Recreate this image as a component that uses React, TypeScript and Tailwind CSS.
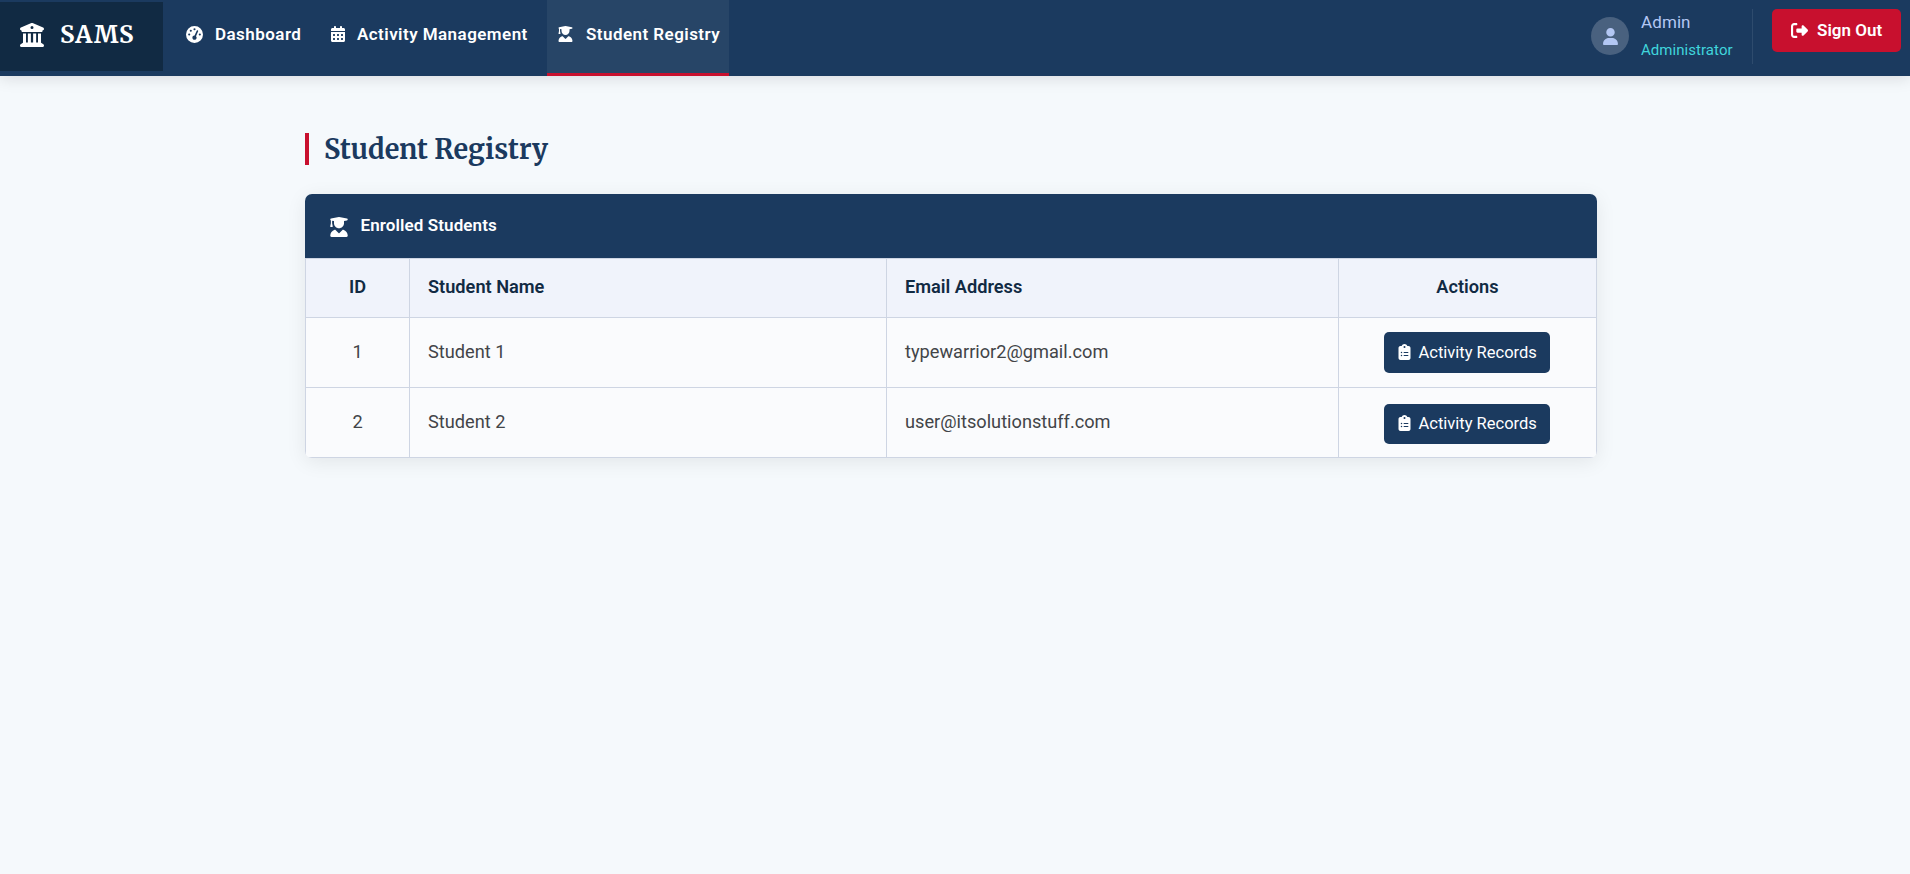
import type { ReactNode } from "react";
import {
  FaBuildingColumns,
  FaCalendarDays,
  FaClipboardList,
  FaGaugeHigh,
  FaRightFromBracket,
  FaUser,
  FaUserGraduate,
} from "react-icons/fa6";

const students = [
  { id: 1, name: "Student 1", email: "typewarrior2@gmail.com" },
  { id: 2, name: "Student 2", email: "user@itsolutionstuff.com" },
];

function NavItem({ icon, label, className }: { icon: ReactNode; label: string; className: string }) {
  return (
    <a href="#" className={`flex h-[76px] items-center border-b-[3px] pb-[5px] text-[17px] leading-6 font-semibold tracking-[0.45px] whitespace-nowrap ${className}`}>
      {icon}
      {label}
    </a>
  );
}

function Header() {
  return (
    <header className="flex h-[76px] items-start bg-[#1b3a5f] text-white shadow-[0_2px_15px_rgba(20,0,20,0.13)]">
      <div className="mt-[2px] flex h-[69px] w-[163px] items-center bg-[#112a43] pb-[3px] pl-5">
        <FaBuildingColumns className="mr-[16px] size-6" />
        <span className="font-['Merriweather','DejaVu_Serif_Condensed','DejaVu_Serif',serif] text-[24px] leading-8 font-bold tracking-[0.8px]">SAMS</span>
      </div>
      <nav className="flex pl-[23px]">
        <NavItem icon={<FaGaugeHigh className="mr-3 size-[17px]" />} label="Dashboard" className="w-[144px] border-transparent" />
        <NavItem icon={<FaCalendarDays className="mr-[11px] size-[16px]" />} label="Activity Management" className="w-[217px] border-transparent" />
        <NavItem icon={<FaUserGraduate className="mr-[13px] h-4 w-[15px]" />} label="Student Registry" className="w-[182px] border-[#c8102e] bg-[#274567] pl-[11px]" />
      </nav>
      <div className="ml-auto flex pt-[9px] pr-[9px]">
        <div className="mt-2 flex size-[38px] items-center justify-center rounded-full bg-[#49617f] text-[#b3c7f3]">
          <FaUser className="size-[17px]" />
        </div>
        <div className="ml-3 h-[55px] w-[112px] border-r border-[#2e4b6d]">
          <div className="text-[17px] leading-[27px] tracking-[0.1px] text-[#b3c7f3]">Admin</div>
          <div className="text-[15px] leading-[28px] tracking-[0.05px] text-[#40d5dc]">Administrator</div>
        </div>
        <button className="ml-[19px] flex h-[43px] w-[129px] items-center rounded-[5px] bg-[#c8102e] pl-[19px] text-[17px] font-semibold whitespace-nowrap">
          <FaRightFromBracket className="mr-[9px] size-[17px]" />
          Sign Out
        </button>
      </div>
    </header>
  );
}

export default function App() {
  return (
    <div className="min-h-screen bg-[#f5f9fc] font-['Roboto',sans-serif]">
      <Header />
      <main className="ml-[305px] w-[1292px] pt-[57px]">
        <h1 className="mb-[29px] flex h-8 items-center border-l-4 border-[#c8102e] pl-[15px] font-['Merriweather','DejaVu_Serif_Condensed','DejaVu_Serif',serif] text-[27px] leading-8 font-bold tracking-[-0.07px] whitespace-nowrap text-[#1b3a5f]">
          Student Registry
        </h1>
        <section className="overflow-hidden rounded-[7px] bg-[#fafbfd] shadow-[0_4px_20px_rgba(0,0,0,0.08)]">
          <div className="flex h-16 items-center bg-[#1b3a5f] pl-[25px] text-[17px] font-semibold text-white">
            <FaUserGraduate className="mt-[2px] mr-[12.5px] h-5 w-[18px]" />
            <h2 className="pb-[2px] leading-6 tracking-[0.1px]">Enrolled Students</h2>
          </div>
          <table className="w-full table-fixed border-collapse text-[18.2px] text-[#424448]">
            <colgroup>
              <col className="w-[104px]" />
              <col className="w-[477px]" />
              <col className="w-[452px]" />
              <col className="w-[258px]" />
            </colgroup>
            <thead>
              <tr className="h-[59px] bg-[#f0f3fb] text-left text-[#112a43] [&>th]:border [&>th]:border-[#ced5e3] [&>th]:pr-[18px] [&>th]:pb-[3px] [&>th]:pl-[18px] [&>th]:font-semibold">
                <th className="text-center">ID</th>
                <th>Student Name</th>
                <th>Email Address</th>
                <th className="text-center">Actions</th>
              </tr>
            </thead>
            <tbody>
              {students.map((s) => (
                <tr key={s.id} className="h-[70px] [&>td]:border [&>td]:border-[#ced5e3] [&>td]:pr-[18px] [&>td]:pl-[18px] last:[&_button]:mt-[2px] last:[&_button]:h-10">
                  <td className="pb-[2px] text-center">{s.id}</td>
                  <td className="pb-[2px]">{s.name}</td>
                  <td className="pb-[2px]">{s.email}</td>
                  <td>
                    <button className="ml-[27px] flex h-[41px] w-[166px] items-center rounded-[5px] bg-[#1b3a5f] pl-[14px] text-[16.5px] whitespace-nowrap text-white">
                      <FaClipboardList className="mt-[-1px] mr-[7.5px] h-4 w-[13px]" />
                      <span className="pt-px">Activity Records</span>
                    </button>
                  </td>
                </tr>
              ))}
            </tbody>
          </table>
        </section>
      </main>
    </div>
  );
}
